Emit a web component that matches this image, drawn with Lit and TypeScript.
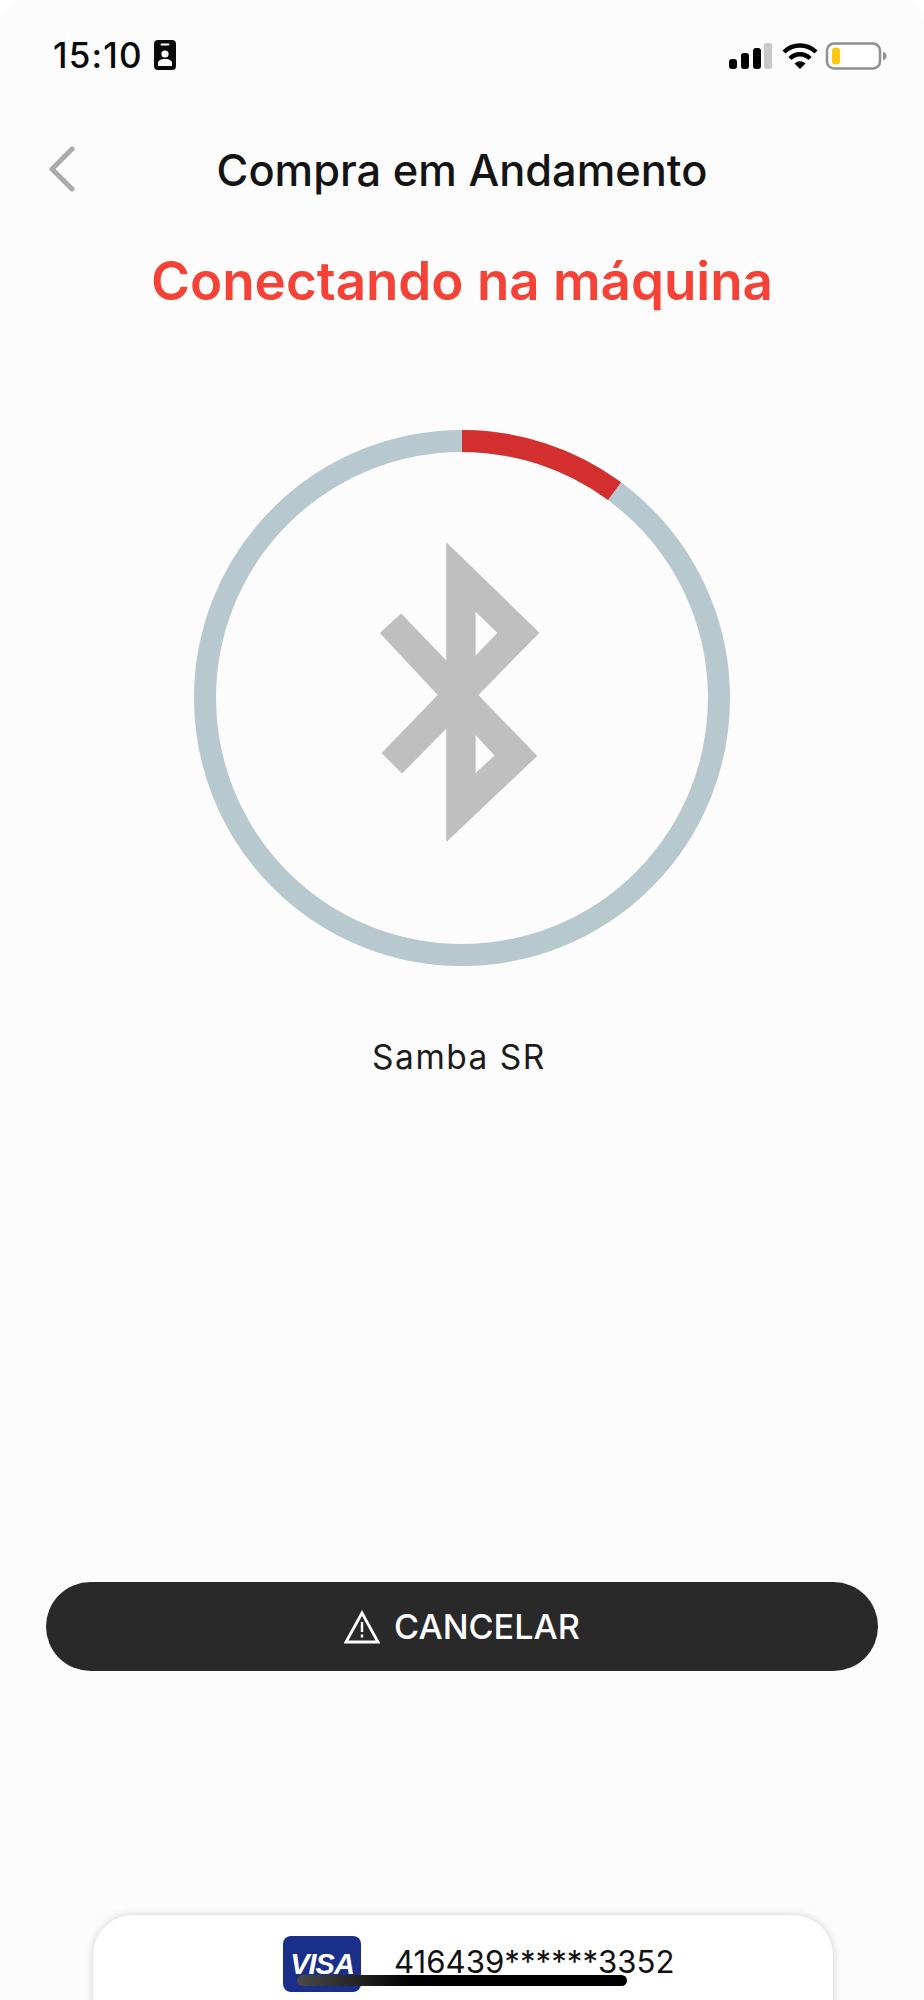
import { LitElement, html, css } from 'lit';
import { customElement } from 'lit/decorators.js';

const RING_RADIUS = 257;
const RING_PROGRESS = 36.4 / 360;

@customElement('app-root')
export class AppRoot extends LitElement {
  static styles = css`
    :host {
      display: block;
      width: 924px;
      height: 2000px;
      background: #fff;
      font-family: 'Inter', 'Roboto', sans-serif;
    }

    .screen {
      position: relative;
      height: 2000px;
      overflow: hidden;
      display: flex;
      flex-direction: column;
      background: #fcfcfc;
      border-radius: 22px 22px 0 0;
    }

    .status {
      height: 110px;
      flex: none;
      display: flex;
      align-items: center;
      justify-content: space-between;
      padding: 0 37px 0 53px;
    }

    .status-left {
      display: flex;
      align-items: center;
      gap: 11px;
    }

    .time {
      font-size: 35px;
      font-weight: 500;
      color: #0a0a0a;
      letter-spacing: 1.2px;
    }

    .header {
      height: 120px;
      flex: none;
      position: relative;
      display: flex;
      align-items: center;
      justify-content: center;
    }

    .back {
      position: absolute;
      left: 46px;
      top: 36px;
    }

    .header-title {
      font-size: 43.400px;
      font-weight: 500;
      color: #141414;
    }

    .title {
      margin: 20px 0 0;
      text-align: center;
      font-size: 52.900px;
      line-height: 62px;
      font-weight: 600;
      color: #f44336;
    }

    .ring {
      display: block;
      flex: none;
      margin: 118px auto 0;
    }

    .device {
      margin-top: 69px;
      padding-right: 6px;
      text-align: center;
      font-size: 33.500px;
      line-height: 44px;
      letter-spacing: 1.5px;
      color: #1c1c1c;
    }

    .cancel {
      flex: none;
      margin: 503px 46px 0;
      height: 89px;
      border-radius: 45px;
      background: #292929;
      color: #fff;
      display: flex;
      align-items: center;
      justify-content: center;
      gap: 14px;
      font-size: 34.200px;
      font-weight: 500;
    }

    .card {
      flex: none;
      margin: 244px 91px 0 93px;
      height: 120px;
      background: #fff;
      border-radius: 40px 40px 0 0;
      box-shadow: 0 0 8px rgba(0, 0, 0, 0.18);
      display: flex;
      align-items: flex-start;
      padding: 21px 0 0 190px;
      gap: 33px;
    }

    .visa {
      width: 78px;
      height: 56px;
      border-radius: 8px;
      background: #1a2f8a;
      color: #fff;
      display: flex;
      align-items: center;
      justify-content: center;
      font-family: 'Liberation Sans', sans-serif;
      font-size: 29px;
      font-weight: 700;
      font-style: italic;
      letter-spacing: -1px;
    }

    .number {
      font-size: 31.200px;
      line-height: 52px;
      color: #111;
    }

    .home {
      position: absolute;
      left: 297px;
      top: 1975px;
      width: 330px;
      height: 11px;
      border-radius: 6px;
      background: linear-gradient(90deg, #4a4a4a, #000 35%);
    }
  `;

  render() {
    const circumference = 2 * Math.PI * RING_RADIUS;
    const arc = circumference * RING_PROGRESS;
    return html`
      <div class="screen">
        <div class="status">
          <div class="status-left">
            <span class="time">15:10</span>
            <svg width="22" height="30" viewBox="0 0 22 30">
              <rect width="22" height="30" rx="4" fill="#0a0a0a" />
              <rect x="6.500" y="3.500" width="9" height="2" rx="1" fill="#fff" />
              <circle cx="11" cy="14" r="3.600" fill="#fff" />
              <path d="M4 26v-3c0-2.500 3-4 7-4s7 1.500 7 4v3z" fill="#fff" />
            </svg>
          </div>
          <svg width="160" height="30" viewBox="0 0 160 30">
            <rect x="2" y="19" width="8" height="10" rx="3" fill="#000" />
            <rect x="14" y="13" width="8" height="16" rx="3" fill="#000" />
            <rect x="26" y="8" width="8" height="21" rx="3" fill="#000" />
            <rect x="37" y="3" width="8" height="26" rx="2" fill="#c8c8c8" />
            <path d="M57 12a23 23 0 0 1 32 0" fill="none" stroke="#000" stroke-width="4.500" />
            <path d="M63 18.500a14 14 0 0 1 20 0" fill="none" stroke="#000" stroke-width="4.500" />
            <path d="M67.500 23.500a8 8 0 0 1 11 0l-5.500 5.500z" fill="#000" />
            <rect x="100" y="3.500" width="53" height="25" rx="7" fill="#fff" stroke="#8f8f8f" stroke-width="2.500" />
            <rect x="105" y="7.500" width="8" height="17" rx="3.500" fill="#fdc90f" />
            <path d="M156 12c2.500 .5 3.500 2 3.500 4s-1 3.500-3.500 4z" fill="#8f8f8f" />
          </svg>
        </div>

        <div class="header">
          <svg class="back" width="30" height="46" viewBox="0 0 30 46">
            <path d="M26 3L6 23l20 20" fill="none" stroke="#ababab" stroke-width="5" stroke-linecap="round" stroke-linejoin="round" />
          </svg>
          <span class="header-title">Compra em Andamento</span>
        </div>

        <h1 class="title">Conectando na máquina</h1>

        <svg class="ring" width="536" height="536" viewBox="0 0 536 536">
          <circle cx="268" cy="268" r="${RING_RADIUS}" fill="none" stroke="#b7c8cf" stroke-width="22" />
          <circle
            cx="268"
            cy="268"
            r="${RING_RADIUS}"
            fill="none"
            stroke="#d32f2f"
            stroke-width="22"
            stroke-dasharray="${arc} ${circumference}"
            transform="rotate(-90 268 268)"
          />
          <path
            fill="#bfbfbf"
            fill-rule="evenodd"
            transform="translate(0 -1.500)"
            d="M252.300 113.700L345.400 204.200L284.400 266.400L343.300 327.400L252.300 413.600V300.200L208 344.900L187.600 324.500L243.700 266.400L185.800 204.600L207.200 185L252.300 231.900Z
               M281.600 183.200V227.100L303.400 204.600Z
               M281.600 306.400V344.500L300.500 327.100Z"
          />
        </svg>

        <div class="device">Samba SR</div>

        <div class="cancel">
          <svg width="36" height="34" viewBox="0 0 36 34">
            <path d="M18 3L34 32H2Z" fill="none" stroke="#fff" stroke-width="2.800" stroke-linejoin="miter" />
            <rect x="16.800" y="12" width="2.400" height="10" fill="#fff" />
            <rect x="16.800" y="24.500" width="2.400" height="3" fill="#fff" />
          </svg>
          <span>CANCELAR</span>
        </div>

        <div class="card">
          <div class="visa">VISA</div>
          <span class="number">416439******3352</span>
        </div>

        <div class="home"></div>
      </div>
    `;
  }
}
